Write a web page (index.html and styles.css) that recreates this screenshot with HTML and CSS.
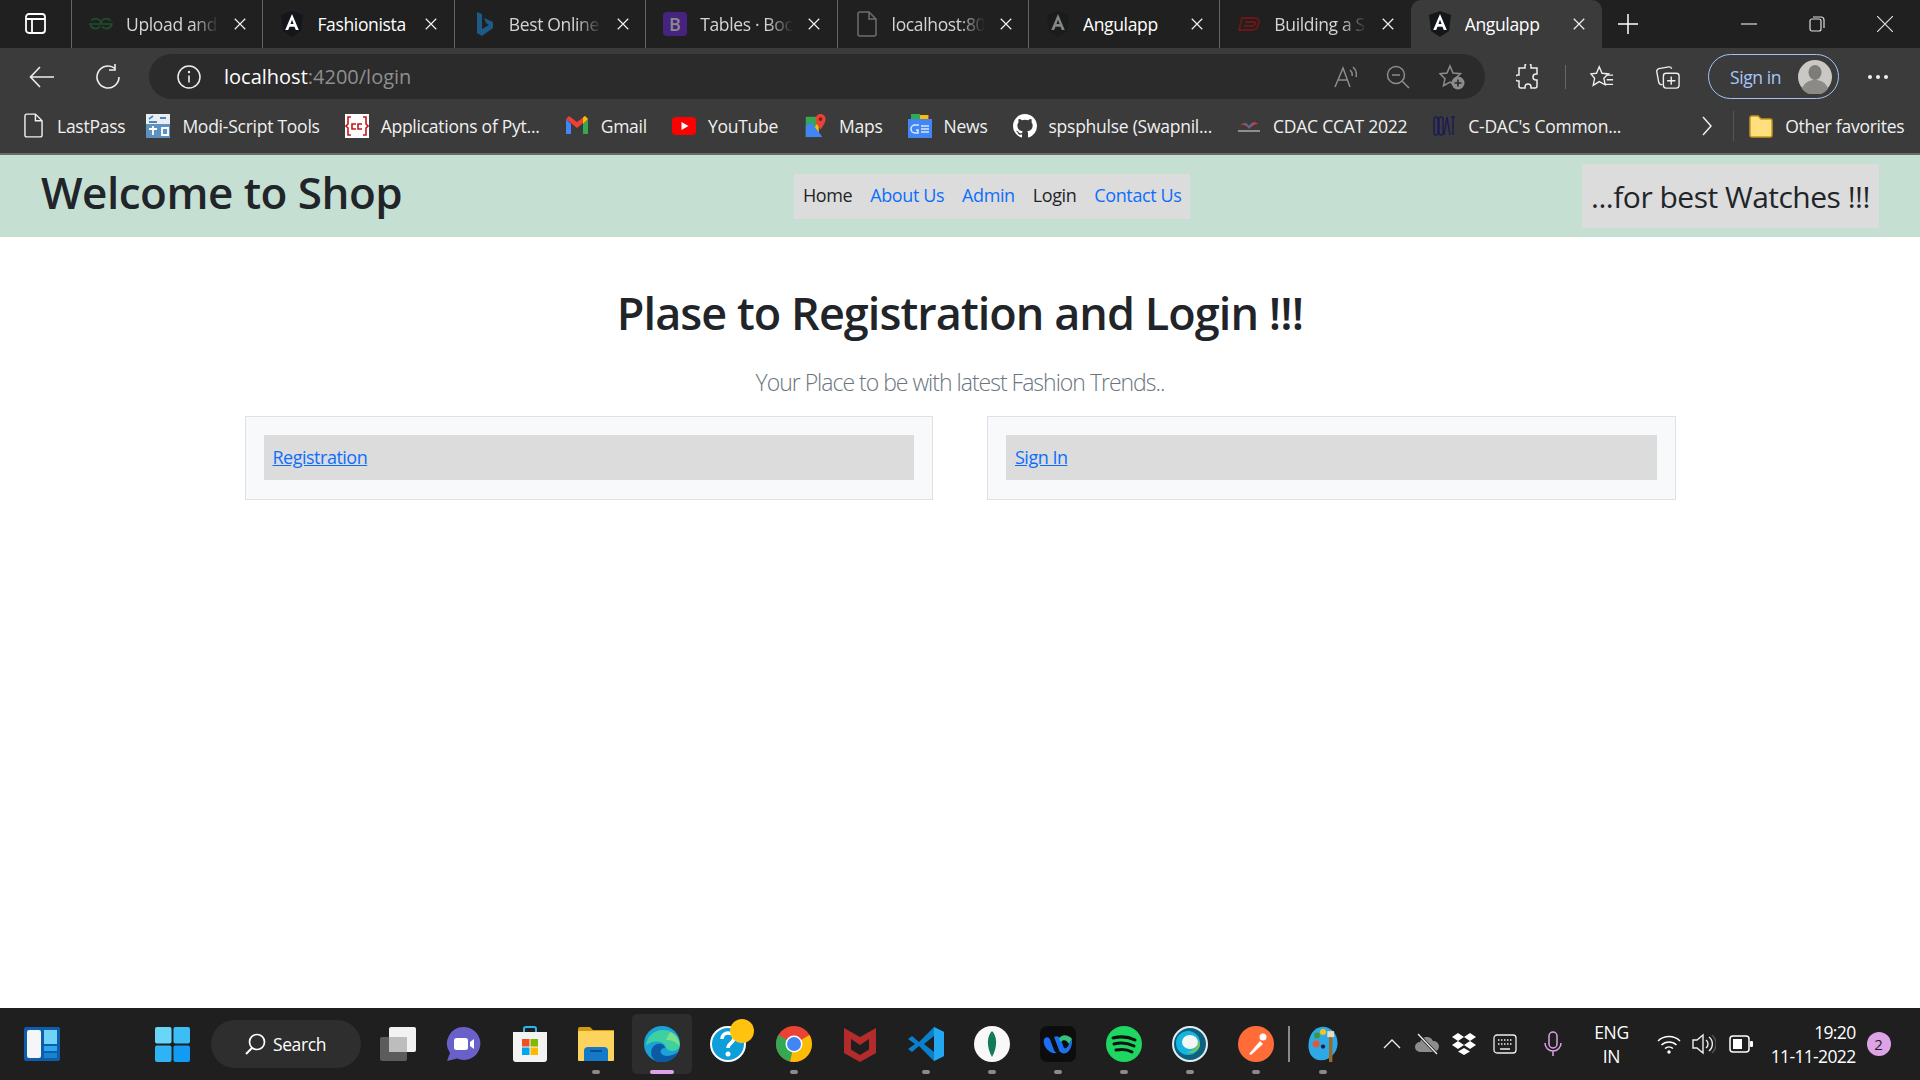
FILE: index.html
```html
<!DOCTYPE html>
<html>
<head>
  <title>Angulapp</title>
  <link rel="stylesheet" href="styles.css">
</head>
<body>
  <svg class="sprite" width="0" height="0">
    <symbol id="i-x" viewBox="0 0 16 16"><path d="M2 2l12 12M14 2L2 14" fill="none" stroke="currentColor" stroke-width="1.4"/></symbol>
    <symbol id="i-ng" viewBox="0 0 24 26"><path d="M12 0L1 4l2 16 9 6 9-6 2-16z" fill="#14161b"/><path d="M12 3L5.2 19h3l1.300-3.300h5L15.800 19h3zM10.500 13L12 8.800l1.600 4.200z" fill="#fff"/></symbol>
    <symbol id="i-page" viewBox="0 0 20 26"><path d="M3 1h9l7 7v15a2 2 0 0 1-2 2H3a2 2 0 0 1-2-2V3a2 2 0 0 1 2-2zM12 1v7h7" fill="none" stroke="currentColor" stroke-width="1.5"/></symbol>
  </svg>

  <!-- tab strip -->
  <div class="tabstrip">
    <div class="side-btn">
      <svg width="21" height="21" viewBox="0 0 21 21"><rect x="1" y="1" width="19" height="19" rx="3" fill="none" stroke="#fff" stroke-width="1.8"/><path d="M1 6h19M7 6v14" stroke="#fff" stroke-width="1.8"/></svg>
    </div>
    <div class="tab">
      <svg class="favicon" viewBox="0 0 22 12"><path d="M11 6h10a5 5 0 0 1-9 2M11 6H1a5 5 0 0 0 9 2M11 6c0-3 2-5 5-5 2 0 3 1 4 2M11 6c0-3-2-5-5-5-2 0-3 1-4 2" fill="none" stroke="#1f4d2a" stroke-width="1.6"/></svg>
      <span class="tab-title">Upload and</span>
      <svg class="tab-x"><use href="#i-x"/></svg>
    </div>
    <div class="tab">
      <svg class="favicon"><use href="#i-ng"/></svg>
      <span class="tab-title bright">Fashionista</span>
      <svg class="tab-x"><use href="#i-x"/></svg>
    </div>
    <div class="tab">
      <svg class="favicon" viewBox="0 0 22 26"><path d="M4 1l5 2v15l7-4-3-2-2-5 9 4v6L9 25l-5-3z" fill="#1d5a86"/></svg>
      <span class="tab-title">Best Online</span>
      <svg class="tab-x"><use href="#i-x"/></svg>
    </div>
    <div class="tab">
      <svg class="favicon" viewBox="0 0 24 24"><rect width="24" height="24" rx="4" fill="#45237f"/><text x="12" y="19" class="fav-b">B</text></svg>
      <span class="tab-title">Tables · Boo</span>
      <svg class="tab-x"><use href="#i-x"/></svg>
    </div>
    <div class="tab">
      <svg class="favicon dim-page"><use href="#i-page"/></svg>
      <span class="tab-title">localhost:80</span>
      <svg class="tab-x"><use href="#i-x"/></svg>
    </div>
    <div class="tab">
      <svg class="favicon dimmed"><use href="#i-ng"/></svg>
      <span class="tab-title bright">Angulapp</span>
      <svg class="tab-x"><use href="#i-x"/></svg>
    </div>
    <div class="tab">
      <svg class="favicon" viewBox="0 0 24 16"><path d="M5 2h13a4 4 0 0 1 4 5l-1 2a6 6 0 0 1-6 5H2zM8 6h9a1 1 0 0 1 1 2 3 3 0 0 1-3 2H7" fill="none" stroke="#6d1616" stroke-width="1.8"/></svg>
      <span class="tab-title">Building a S</span>
      <svg class="tab-x"><use href="#i-x"/></svg>
    </div>
    <div class="tab active">
      <svg class="favicon"><use href="#i-ng"/></svg>
      <span class="tab-title bright">Angulapp</span>
      <svg class="tab-x"><use href="#i-x"/></svg>
    </div>
    <div class="new-tab">
      <svg width="22" height="22" viewBox="0 0 22 22"><path d="M11 1v20M1 11h20" stroke="#fff" stroke-width="1.5"/></svg>
    </div>
    <div class="win-btns">
      <svg class="win-btn" viewBox="0 0 16 16"><path d="M0 8h16" stroke="#ddd" stroke-width="1.2"/></svg>
      <svg class="win-btn" viewBox="0 0 16 16"><rect x="1" y="3" width="11" height="12" rx="2" fill="none" stroke="#ddd" stroke-width="1.2"/><path d="M4 1h8a3 3 0 0 1 3 3v8" fill="none" stroke="#ddd" stroke-width="1.2"/></svg>
      <svg class="win-btn" viewBox="0 0 16 16"><path d="M0 0l16 16M16 0L0 16" stroke="#ddd" stroke-width="1.2"/></svg>
    </div>
  </div>

  <!-- address bar -->
  <div class="toolbar">
    <svg class="nav-btn" viewBox="0 0 26 22"><path d="M25 11H2M11 1L1.5 11 11 21" fill="none" stroke="#eee" stroke-width="1.6"/></svg>
    <svg class="nav-btn reload" viewBox="0 0 26 26"><path d="M20 4.5A11 11 0 1 0 24 13M20 0v6h-6" fill="none" stroke="#eee" stroke-width="1.6"/></svg>
    <div class="omnibox">
      <svg class="info" viewBox="0 0 24 24"><circle cx="12" cy="12" r="11" fill="none" stroke="#eee" stroke-width="1.5"/><path d="M12 10.500v7" stroke="#eee" stroke-width="1.6"/><circle cx="12" cy="7" r="1.200" fill="#eee"/></svg>
      <span class="url"><span class="host">localhost</span>:4200/login</span>
      <div class="omni-icons">
        <svg class="omni-icon" viewBox="0 0 24 24"><path d="M2 22L10 3l7 19M5 15h10M17 5a6 6 0 0 1 2 6M20 2a10 10 0 0 1 3 10" fill="none" stroke="#8c8c8c" stroke-width="1.500"/></svg>
        <svg class="omni-icon" viewBox="0 0 24 24"><circle cx="10" cy="10" r="8.500" fill="none" stroke="#8c8c8c" stroke-width="1.500"/><path d="M16 16l7 7M6 10h8" stroke="#8c8c8c" stroke-width="1.500"/></svg>
        <svg class="omni-icon fav-add" viewBox="0 0 26 26"><path d="M11 2l3 7 7.500.7-5.500 5 1.500 7L11 18l-6.500 3.700 1.500-7-5-5L8 9z" fill="none" stroke="#8c8c8c" stroke-width="1.500"/><circle cx="19" cy="19" r="6.500" fill="#8c8c8c"/><path d="M19 15.500v7M15.500 19h7" stroke="#2b2b2b" stroke-width="1.600"/></svg>
      </div>
    </div>
    <svg class="tool-icon puzzle" viewBox="0 0 24 26"><path d="M9 2a3 3 0 0 1 6 0v2h6v6h-1a3 3 0 0 0 0 6h1v6a2 2 0 0 1-2 2h-4v-1a3 3 0 0 0-6 0v1H5a2 2 0 0 1-2-2v-5H2a3 3 0 0 1 0-6h1V4h6z" fill="none" stroke="#eee" stroke-width="1.500"/></svg>
    <span class="tool-sep"></span>
    <svg class="tool-icon fav-list" viewBox="0 0 26 26"><path d="M10 2l3 7 7 .6-5 4.800 1.500 7L10 18l-6.500 4 1.500-7.600L1 9.600 7 9zM17 11h8M18 16h7M17 21h8" fill="none" stroke="#eee" stroke-width="1.500"/></svg>
    <svg class="tool-icon coll" viewBox="0 0 26 26"><path d="M7 21a3 3 0 0 1-4-2L1 8a3 3 0 0 1 2-4l11-2a3 3 0 0 1 3 2" fill="none" stroke="#eee" stroke-width="1.500"/><rect x="8" y="9" width="17" height="16" rx="3" fill="none" stroke="#eee" stroke-width="1.500"/><path d="M16.500 12.500v9M12 17h9" stroke="#eee" stroke-width="1.500"/></svg>
    <div class="signin">
      <span>Sign in</span>
      <svg class="avatar" viewBox="0 0 34 34"><circle cx="17" cy="17" r="17" fill="#c9c8c4"/><ellipse cx="17" cy="12.500" rx="6.500" ry="7.500" fill="#7d7c79"/><path d="M4 29c2-7 8-9 13-9s11 2 13 9a17 17 0 0 1-26 0z" fill="#8b8a87"/></svg>
    </div>
    <div class="more-btn"><i></i><i></i><i></i></div>
  </div>

  <!-- favorites bar -->
  <div class="bookmarks">
    <div class="bm first">
      <svg class="bm-icon page-ic"><use href="#i-page"/></svg><span>LastPass</span>
    </div>
    <div class="bm">
      <svg class="bm-icon" viewBox="0 0 24 24"><rect width="24" height="24" fill="#e9eef3"/><rect y="10" width="24" height="14" fill="#5d92c0"/><path d="M3 8h8M3 5l4-3M14 4h6M16 14h6v7h-6zM3 15h8M7 12v9" stroke="#4f86b8" stroke-width="1.800" fill="none"/><path d="M3 15h8M7 12v9M16 14h6v7h-6z" stroke="#fff" stroke-width="1.800" fill="none"/></svg><span>Modi-Script Tools</span>
    </div>
    <div class="bm">
      <svg class="bm-icon" viewBox="0 0 24 24"><rect width="24" height="24" fill="#fff"/><path d="M6 3H3v7l-2 2 2 2v7h3M18 3h3v7l2 2-2 2v7h-3" fill="none" stroke="#c4161c" stroke-width="1.600"/><path d="M11 10H7v5h4M17 10h-4v5h4" fill="none" stroke="#c4161c" stroke-width="1.600"/></svg><span>Applications of Pyt...</span>
    </div>
    <div class="bm">
      <svg class="bm-icon" viewBox="0 0 24 20"><path d="M1 3v15h5V8z" fill="#4285f4"/><path d="M23 3v15h-5V8z" fill="#34a853"/><path d="M1 3l11 9 11-9-3-3-8 6-8-6z" fill="#ea4335"/><path d="M18 8l5-5-3-3-2 1.500z" fill="#fbbc04"/></svg><span>Gmail</span>
    </div>
    <div class="bm">
      <svg class="bm-icon" viewBox="0 0 24 18"><rect width="24" height="18" rx="4" fill="#f00"/><path d="M9.500 5v8l7-4z" fill="#fff"/></svg><span>YouTube</span>
    </div>
    <div class="bm">
      <svg class="bm-icon" viewBox="0 0 24 26"><path d="M2 3h14v22H2z" fill="#35a852"/><path d="M2 25L16 9v16z" fill="#fbbc04"/><path d="M2 25V13l6-4 12 16z" fill="#4285f4"/><path d="M18 0a5.500 5.500 0 0 1 5.500 5.500C23.500 10 18 17 18 17s-5.500-7-5.500-11.500A5.500 5.500 0 0 1 18 0z" fill="#ea4335"/><circle cx="18" cy="5.500" r="2" fill="#7c1f19"/></svg><span>Maps</span>
    </div>
    <div class="bm">
      <svg class="bm-icon" viewBox="0 0 24 24"><path d="M3 1h18v8H3z" fill="#ea4335"/><path d="M3 0h9v8H3z" fill="#34a853"/><path d="M12 1h8v7h-8z" fill="#fbbc04"/><rect y="5" width="24" height="19" fill="#4285f4"/><path d="M11 11H7a2.500 2.500 0 0 0 0 8h3v-3H8M13 12h8M13 15h8M13 18h8" fill="none" stroke="#dbe8fd" stroke-width="1.500"/></svg><span>News</span>
    </div>
    <div class="bm">
      <svg class="bm-icon" viewBox="0 0 16 16"><path fill="#fff" d="M8 0C3.580 0 0 3.580 0 8c0 3.540 2.290 6.530 5.470 7.590.4.070.55-.17.55-.38 0-.19-.01-.82-.01-1.490-2.010.37-2.530-.49-2.690-.94-.09-.23-.48-.94-.82-1.130-.28-.15-.68-.52-.01-.53.630-.01 1.080.58 1.230.82.720 1.210 1.870.87 2.330.66.070-.52.280-.87.510-1.070-1.780-.2-3.640-.89-3.640-3.950 0-.87.31-1.590.82-2.150-.08-.2-.36-1.020.08-2.120 0 0 .67-.21 2.200.82a7.600 7.600 0 0 1 4 0c1.530-1.040 2.200-.82 2.200-.82.44 1.100.16 1.920.08 2.120.51.56.82 1.270.82 2.150 0 3.070-1.870 3.750-3.650 3.950.29.250.54.730.54 1.480 0 1.070-.01 1.930-.01 2.200 0 .21.15.46.55.38A8 8 0 0 0 16 8c0-4.420-3.580-8-8-8z"/></svg><span>spsphulse (Swapnil...</span>
    </div>
    <div class="bm">
      <svg class="bm-icon" viewBox="0 0 24 16"><path d="M3 7c4-3 7-2 9 1 2-4 6-5 9-2-4 0-6 2-9 5-2-3-5-5-9-4z" fill="#d23b3b"/><path d="M8 5l4 4 4-4" stroke="#3a6fb0" fill="none" stroke-width="1.500"/><path d="M1 13h22" stroke="#8a8f96" stroke-width="2"/></svg><span>CDAC CCAT 2022</span>
    </div>
    <div class="bm">
      <svg class="bm-icon" viewBox="0 0 22 24"><rect x="1" y="3" width="4" height="18" rx="2" fill="none" stroke="#1c1c56" stroke-width="1.500"/><rect x="6" y="3" width="4" height="18" rx="2" fill="none" stroke="#1c1c56" stroke-width="1.500"/><path d="M11 21l3-18 3 18M18 3h4M20 3v18" fill="none" stroke="#1c1c56" stroke-width="1.500"/></svg><span>C-DAC's Common...</span>
    </div>
    <svg class="bm-more" viewBox="0 0 10 20"><path d="M1 1l8 9-8 9" fill="none" stroke="#eee" stroke-width="1.500"/></svg>
    <span class="bm-sep"></span>
    <div class="bm other">
      <svg class="bm-icon" viewBox="0 0 24 24"><path d="M1 4a2 2 0 0 1 2-2h6l3 3h9a2 2 0 0 1 2 2v14a2 2 0 0 1-2 2H3a2 2 0 0 1-2-2z" fill="#ffdf7e" stroke="#c9971c" stroke-width="1.500"/></svg><span>Other favorites</span>
    </div>
  </div>
  <div class="chrome-edge"></div>

  <!-- page -->
  <header class="shop-header">
    <h1 class="shop-title">Welcome to Shop</h1>
    <nav class="shop-nav">
      <a class="nav-dark">Home</a>
      <a>About Us</a>
      <a>Admin</a>
      <a class="nav-dark">Login</a>
      <a>Contact Us</a>
    </nav>
    <div class="shop-tag">...for best Watches !!!</div>
  </header>

  <main class="page">
    <h1 class="hero-title">Plase to Registration and Login !!!</h1>
    <p class="lead">Your Place to be with latest Fashion Trends..</p>
    <div class="cards">
      <div class="card"><div class="card-link"><a href="#">Registration</a></div></div>
      <div class="card"><div class="card-link"><a href="#">Sign In</a></div></div>
    </div>
  </main>

  <!-- taskbar -->
  <footer class="taskbar">
    <svg class="widgets" viewBox="0 0 36 34"><rect width="36" height="34" rx="2" fill="#0f5cab"/><rect x="3" y="3" width="14" height="28" rx="2" fill="#f4f6f8"/><rect x="20" y="3" width="13" height="14" fill="#6fd3f7"/><rect x="20" y="19" width="13" height="5" fill="#2aa7ee"/><rect x="20" y="26" width="13" height="5" fill="#1784d2"/></svg>
    <svg class="start" viewBox="0 0 36 36"><rect width="17" height="17" rx="2" fill="#69d6f8"/><rect x="19" width="17" height="17" rx="2" fill="#3dbdf5"/><rect y="19" width="17" height="17" rx="2" fill="#2fb3f3"/><rect x="19" y="19" width="17" height="17" rx="2" fill="#129bf2"/></svg>
    <div class="search">
      <svg width="22" height="22" viewBox="0 0 22 22"><circle cx="13" cy="9" r="7.500" fill="none" stroke="#fff" stroke-width="1.700"/><path d="M8 15l-6 6" stroke="#fff" stroke-width="1.900"/></svg>
      <span>Search</span>
    </div>
    <div class="apps">
      <div class="app"><svg class="app-ic" viewBox="0 0 36 34"><rect y="10" width="27" height="24" rx="2" fill="#5c5c5c"/><rect x="9" width="27" height="25" rx="2" fill="#f2f2f2"/><rect x="9" y="10" width="18" height="15" fill="#bdbdbd"/></svg></div>
      <div class="app"><svg class="app-ic" viewBox="0 0 36 36"><path d="M18 1a16.500 16.500 0 1 1-7 31.500L1 35l3-8A16.500 16.500 0 0 1 18 1z" fill="#6a60c9"/><rect x="8" y="12" width="14" height="12" rx="2.500" fill="#fff"/><path d="M24 16l4-3v10l-4-3z" fill="#fff"/></svg></div>
      <div class="app"><svg class="app-ic" viewBox="0 0 36 36"><path d="M12 6V3a2 2 0 0 1 2-2h8a2 2 0 0 1 2 2v3" fill="none" stroke="#2cb5f0" stroke-width="2"/><path d="M1 6h34v27a3 3 0 0 1-3 3H4a3 3 0 0 1-3-3z" fill="#f3f3f3"/><rect x="10" y="13" width="7.500" height="7.500" fill="#f25022"/><rect x="18.500" y="13" width="7.500" height="7.500" fill="#7fba00"/><rect x="10" y="21.500" width="7.500" height="7.500" fill="#00a4ef"/><rect x="18.500" y="21.500" width="7.500" height="7.500" fill="#ffb900"/></svg></div>
      <div class="app running"><svg class="app-ic" viewBox="0 0 36 34"><path d="M0 2a2 2 0 0 1 2-2h10l3 3h21v6H0z" fill="#d59a12"/><rect y="4" width="36" height="30" rx="1" fill="#fcd35c"/><path d="M6 34V24a4 4 0 0 1 4-4h16a4 4 0 0 1 4 4v10z" fill="#1479c9"/><path d="M12 24h12" stroke="#0b4f8a" stroke-width="2"/></svg></div>
      <div class="app running edge"><svg class="app-ic" viewBox="0 0 36 36"><circle cx="18" cy="18" r="18" fill="#1aa2d8"/><path d="M2 20C3 9 11 4 19 4c9 0 16 6 17 14 0 4-3 7-8 7-6 0-5-4-8-7-5-4-14-3-18 2z" fill="#3ed0a0"/><path d="M14 36C6 33 5 23 11 19c5-3 10 0 10 3-4 0-5 3-4 5 2 4 10 4 17-1-3 6-10 12-20 10z" fill="#0c59a4"/><path d="M22 14c4 0 10 1 13 6 1-6-3-12-9-14z" fill="#7ae08a"/></svg></div>
      <div class="app badge-app"><svg class="app-ic" viewBox="0 0 36 36"><circle cx="18" cy="18" r="17" fill="#0e9fdb" stroke="#fff" stroke-width="2"/><path d="M12 13c0-4 3-6 6-6s6 2 6 5c0 5-6 5-6 10" fill="none" stroke="#fff" stroke-width="3.500"/><circle cx="18" cy="28" r="2.500" fill="#fff"/></svg><span class="notify"></span></div>
      <div class="app running"><svg class="app-ic" viewBox="0 0 36 36"><circle cx="18" cy="18" r="18" fill="#ea4335"/><path d="M18 18L2.400 9A18 18 0 0 0 14 35.500z" fill="#34a853"/><path d="M18 18l-4 17.500A18 18 0 0 0 36 18 18 18 0 0 0 33.600 9z" fill="#fbbc04"/><circle cx="18" cy="18" r="8.500" fill="#fff"/><circle cx="18" cy="18" r="7" fill="#4285f4"/></svg></div>
      <div class="app"><svg class="app-ic" viewBox="0 0 36 36"><path d="M2 2l16 9 16-9v25L18 36 2 27z" fill="#b32b2b"/><path d="M9 13l9 6 9-6v10.500L18 29l-9-5.500z" fill="#1f1f1f"/></svg></div>
      <div class="app running"><svg class="app-ic" viewBox="0 0 36 36"><path d="M26 1l10 5v24l-10 5L11 20l-7 6-4-3 7-5-7-5 4-3 7 6z" fill="#0a7fcb"/><path d="M26 1l10 5v24l-10 5z" fill="#22a7f0"/><path d="M26 10L16 18l10 8z" fill="#1f1f1f"/></svg></div>
      <div class="app running"><svg class="app-ic" viewBox="0 0 36 36"><circle cx="18" cy="18" r="18" fill="#f8f8f8"/><path d="M18 5c5 5 6 15 0 26-6-11-5-21 0-26z" fill="#13795b"/></svg></div>
      <div class="app running"><svg class="app-ic" viewBox="0 0 36 36"><rect width="36" height="36" rx="7" fill="#0d0d0d"/><path d="M4 13c3-3 6-2 7 3l3 8c1 3 4 3 5 0l-5-13c3-2 6 0 7 3l3 8c2 1 4-1 5-4l3-5v4c-1 8-6 12-10 10-2-1-3-2-3-3-2 4-7 4-10 1-4-3-6-8-5-12z" fill="#1b6ff0"/><path d="M19 13c2-5 9-5 13 0l-3 5c-2-4-6-5-8-2z" fill="#33c47c"/></svg></div>
      <div class="app running"><svg class="app-ic" viewBox="0 0 36 36"><circle cx="18" cy="18" r="18" fill="#1ed760"/><path d="M7 12c8-2 16-1 22 2M8 18c7-2 14-1 20 2M10 24c5-1 11-1 16 2" fill="none" stroke="#111" stroke-width="3" stroke-linecap="round"/></svg></div>
      <div class="app running"><svg class="app-ic" viewBox="0 0 36 36"><circle cx="18" cy="18" r="17" fill="#0f5f7f" stroke="#dfeef3" stroke-width="2"/><circle cx="16" cy="17" r="12" fill="#14b4e0"/><path d="M26 11c2 8-4 15-12 15 6 3 14-1 14-8z" fill="#78c060"/><ellipse cx="18" cy="16" rx="8" ry="7" fill="#f3f7f3"/></svg></div>
      <div class="app running"><svg class="app-ic" viewBox="0 0 36 36"><circle cx="18" cy="18" r="18" fill="#ff6c37"/><path d="M11 28l11-13 3 3-12 11z" fill="#fff"/><circle cx="25" cy="11" r="3.500" fill="#fff"/></svg></div>
      <span class="apps-sep"></span>
      <div class="app running"><svg class="app-ic" viewBox="0 0 36 42"><path d="M18 1c9 0 17 8 17 19s-9 20-19 20C6 40 1 32 1 23 1 11 8 1 18 1z" fill="#2fa8e6"/><circle cx="10" cy="21" r="4" fill="#e8563a"/><circle cx="11" cy="11" r="3.500" fill="#3a9a3a"/><circle cx="18" cy="7" r="3.500" fill="#f5c518"/><circle cx="18" cy="24" r="2.500" fill="#12243c"/><rect x="25" y="12" width="4" height="30" fill="#9a6a2a"/><rect x="23" y="6" width="8" height="7" fill="#e8dcc2"/></svg></div>
    </div>
    <div class="tray">
      <svg class="chev" viewBox="0 0 18 10"><path d="M1 9l8-8 8 8" fill="none" stroke="#eee" stroke-width="1.300"/></svg>
      <svg class="cloud" viewBox="0 0 26 24"><path d="M6 20a5 5 0 0 1 0-10 7 7 0 0 1 13-1 5.500 5.500 0 0 1 1 11z" fill="#8c8c8c"/><path d="M4 2l19 20" stroke="#1f1f1f" stroke-width="3"/><path d="M4 2l19 20" stroke="#eee" stroke-width="1.300"/></svg>
      <svg class="dropbox" viewBox="0 0 24 22"><path d="M6 0l6 4-6 4-6-4zM18 0l6 4-6 4-6-4zM6 8l6 4-6 4-6-4zM18 8l6 4-6 4-6-4zM12 15l6 3.500-6 3.500-6-3.500z" fill="#fff"/></svg>
      <svg class="keyboard" viewBox="0 0 24 20"><rect x="1" y="1" width="22" height="18" rx="3" fill="none" stroke="#eee" stroke-width="1.300"/><path d="M5 6h14M5 10h14" stroke="#eee" stroke-width="1.500" stroke-dasharray="1.500 1.500"/><path d="M7 15h10" stroke="#eee" stroke-width="1.500"/></svg>
      <svg class="mic" viewBox="0 0 18 26"><rect x="5" y="1" width="8" height="16" rx="4" fill="none" stroke="#dda3e6" stroke-width="1.500"/><path d="M1 12a8 8 0 0 0 16 0M9 20v5" fill="none" stroke="#dda3e6" stroke-width="1.500"/></svg>
      <div class="lang">ENG<br>IN</div>
      <svg class="wifi" viewBox="0 0 24 20"><path d="M1 7a16 16 0 0 1 22 0M4.500 11a11 11 0 0 1 15 0M8 14.500a6 6 0 0 1 8 0" fill="none" stroke="#fff" stroke-width="1.500"/><circle cx="12" cy="18" r="1.700" fill="#fff"/></svg>
      <svg class="sound" viewBox="0 0 24 22"><path d="M1 7h4l6-5v18l-6-5H1zM14 7a5 5 0 0 1 0 8M17 4a9 9 0 0 1 0 14" fill="none" stroke="#eee" stroke-width="1.400"/><path d="M20 2a12 12 0 0 1 0 18" fill="none" stroke="#555" stroke-width="1.400"/></svg>
      <svg class="battery" viewBox="0 0 24 18"><rect x="1" y="1" width="19" height="16" rx="3" fill="none" stroke="#fff" stroke-width="1.500"/><rect x="4" y="4" width="9" height="10" fill="#fff"/><rect x="21" y="6" width="3" height="6" rx="1" fill="#fff"/></svg>
      <div class="clock">19:20<br>11-11-2022</div>
      <span class="notif-count">2</span>
    </div>
  </footer>
</body>
</html>
```

FILE: styles.css
```css
/* browser chrome + page */
* {
  box-sizing: border-box;
}

body {
  margin: 0;
  height: 1080px;
  overflow: hidden;
  display: flex;
  flex-direction: column;
  background: #fff;
  font-family: "Open Sans", "Noto Sans", sans-serif;
  color: #212529;
}

.sprite {
  position: absolute;
}

/* tab strip */
.tabstrip {
  display: flex;
  height: 48px;
  background: #202020;
  color: #fff;
}

.side-btn {
  width: 71px;
  display: flex;
  align-items: center;
  padding-left: 25px;
  padding-bottom: 2px;
}

.tab {
  width: 191.4px;
  display: flex;
  align-items: center;
  height: 48px;
  padding-left: 17px;
  border-left: 1px solid #636363;
}

.tab.active {
  background: #3b3b3b;
  border-left: 0;
  border-radius: 10px 10px 0 0;
}

.favicon {
  width: 24px;
  height: 26px;
  flex: none;
}

.dimmed {
  opacity: 0.45;
}

.dim-page {
  color: #6e6e6e;
}

.fav-b {
  font-size: 18px;
  font-weight: 600;
  text-anchor: middle;
  fill: #8a8a8a;
  font-family: "Open Sans", sans-serif;
}

.tab-title {
  margin-left: 13px;
  width: 93px;
  white-space: nowrap;
  overflow: hidden;
  font-size: 17.5px;
  letter-spacing: -0.35px;
  color: #d4d4d4;
  -webkit-mask-image: linear-gradient(90deg, #000 72%, transparent 100%);
  mask-image: linear-gradient(90deg, #000 72%, transparent 100%);
}

.tab-title.bright {
  color: #fff;
  -webkit-mask-image: none;
  mask-image: none;
}

.tab-x {
  width: 14px;
  height: 14px;
  margin-left: 14px;
  color: #f0f0f0;
  flex: none;
}

.new-tab {
  width: 52px;
  display: flex;
  align-items: center;
  justify-content: center;
}

.win-btns {
  margin-left: auto;
  display: flex;
  align-items: center;
  gap: 52px;
  padding-right: 27px;
}

.win-btn {
  width: 16px;
  height: 16px;
}

/* toolbar */
.toolbar {
  height: 51px;
  padding-top: 6px;
  display: flex;
  align-items: flex-start;
  background: #3b3b3b;
}

.nav-btn {
  width: 26px;
  height: 22px;
  margin: 12px 0 0 29px;
}

.reload {
  height: 26px;
  margin: 10px 0 0 40px;
}

.omnibox {
  width: 1336px;
  height: 45px;
  margin-left: 28px;
  border-radius: 23px;
  background: #2b2b2b;
  display: flex;
  align-items: center;
  padding-left: 28px;
}

.info {
  width: 24px;
  height: 24px;
  flex: none;
}

.url {
  margin-left: 23px;
  font-size: 20px;
  letter-spacing: 0;
  color: #8f8f8f;
}

.host {
  color: #fff;
}

.omni-icons {
  margin-left: auto;
  display: flex;
  align-items: center;
  gap: 29px;
  padding-right: 20px;
}

.omni-icon {
  width: 24px;
  height: 24px;
}

.fav-add {
  width: 26px;
  height: 26px;
}

.tool-icon {
  width: 24px;
  height: 26px;
  margin-top: 10px;
  flex: none;
}

.puzzle {
  margin-left: 31px;
}

.tool-sep {
  width: 1px;
  height: 24px;
  margin: 11px 0 0 25px;
  background: #666;
}

.fav-list {
  margin-left: 24px;
}

.coll {
  margin-left: 42px;
}

.signin {
  width: 131px;
  height: 45px;
  margin-left: 28px;
  border: 1.5px solid #a3c4f0;
  border-radius: 23px;
  display: flex;
  align-items: center;
  padding-left: 21px;
  color: #a8c7fa;
  font-size: 17.5px;
  letter-spacing: -0.4px;
  flex: none;
}

.avatar {
  width: 34px;
  height: 34px;
  margin-left: auto;
  margin-right: 6px;
}

.more-btn {
  display: flex;
  gap: 4px;
  margin: 21px 0 0 29px;
}

.more-btn i {
  width: 4px;
  height: 4px;
  border-radius: 50%;
  background: #f0f0f0;
}

/* favorites */
.bookmarks {
  height: 54px;
  padding-bottom: 1px;
  display: flex;
  align-items: center;
  padding-left: 24px;
  background: #3b3b3b;
  color: #f0f0f0;
  font-size: 17.5px;
  letter-spacing: -0.25px;
  white-space: nowrap;
}

.bm {
  display: flex;
  align-items: center;
  gap: 12px;
  margin-right: 25px;
}

.bm.first {
  margin-right: 21px;
}

.bm-icon {
  width: 24px;
  height: 24px;
  flex: none;
}

.page-ic {
  width: 19px;
  height: 25px;
  margin-right: 2px;
  color: #f0f0f0;
}

.bm-more {
  width: 10px;
  height: 20px;
  margin-left: 56px;
}

.bm-sep {
  width: 1px;
  height: 30px;
  margin-left: 21px;
  background: #555;
}

.bm.other {
  margin: 0 0 0 15px;
}

.chrome-edge {
  height: 2px;
  background: #6b6b6b;
}

/* shop header */
.shop-header {
  height: 82px;
  display: flex;
  align-items: center;
  justify-content: space-between;
  padding: 0 41px;
  background: #c5e0d3;
}

.shop-title {
  margin: 0 0 7px;
  font-size: 44px;
  font-weight: 600;
  letter-spacing: -0.5px;
  line-height: 1.2;
}

.shop-nav {
  display: flex;
  align-items: center;
  height: 45px;
  padding: 0 9px 2px;
  gap: 18px;
  background: #dcdcdc;
  font-size: 18px;
  letter-spacing: -0.4px;
  color: #0d6efd;
}

.shop-nav .nav-dark {
  color: #212529;
}

.shop-tag {
  height: 64px;
  display: flex;
  align-items: center;
  padding: 0 9px;
  background: #dcdcdc;
  font-size: 30px;
  letter-spacing: -0.5px;
}

/* main */
.page {
  flex: 1;
  display: flex;
  flex-direction: column;
  align-items: center;
}

.hero-title {
  margin: 49px 0 0;
  font-size: 45px;
  font-weight: 600;
  letter-spacing: -0.95px;
  line-height: 54px;
}

.lead {
  margin: 27px 0 0;
  font-size: 23px;
  font-weight: 300;
  letter-spacing: -1px;
  line-height: 30px;
  color: #6c757d;
}

.cards {
  width: 1431px;
  display: grid;
  grid-template-columns: 1fr 1fr;
  gap: 54px;
  margin-top: 19px;
}

.card {
  height: 84px;
  padding: 18px;
  border: 1px solid #dee2e6;
  background: #f8f9fa;
}

.card-link {
  height: 45px;
  display: flex;
  align-items: center;
  padding: 0 0 2px 9px;
  background: #dcdcdc;
  font-size: 18px;
  letter-spacing: -0.5px;
}

.card-link a {
  color: #0d6efd;
}

/* taskbar */
.taskbar {
  height: 72px;
  display: flex;
  align-items: center;
  background: #1f1f1f;
  color: #fff;
}

.widgets {
  width: 36px;
  height: 34px;
  margin-left: 24px;
  flex: none;
}

.start {
  width: 35px;
  height: 35px;
  margin-left: 95px;
  flex: none;
}

.search {
  width: 150px;
  height: 48px;
  margin-left: 21px;
  border-radius: 24px;
  background: #2e2e2e;
  display: flex;
  align-items: center;
  gap: 7px;
  padding-left: 33px;
  font-size: 17.5px;
  letter-spacing: -0.4px;
  flex: none;
}

.apps {
  display: flex;
  align-items: center;
  margin-left: 4px;
  flex: none;
}

.app {
  width: 66px;
  height: 60px;
  display: flex;
  align-items: center;
  justify-content: center;
  position: relative;
}

.app-ic {
  width: 36px;
  height: 36px;
}

.app.running::after {
  content: "";
  position: absolute;
  bottom: 0;
  left: 29px;
  width: 8px;
  height: 4px;
  border-radius: 2px;
  background: #8a8a8a;
}

.app.edge {
  width: 60px;
  margin: 0 3px;
  background: #2d2d2d;
  border-radius: 5px;
}

.app.edge::after {
  left: 18px;
  width: 24px;
  background: #dda3e6;
}

.notify {
  position: absolute;
  top: 5px;
  right: 7px;
  width: 24px;
  height: 24px;
  border-radius: 50%;
  background: #ffc20e;
}

.apps-sep {
  width: 1.5px;
  height: 36px;
  margin: 0 0 0 -1px;
  background: #8a8a8a;
}

.tray {
  display: flex;
  align-items: center;
  margin-left: 27px;
  flex: none;
}

.chev {
  width: 18px;
  height: 10px;
}

.cloud {
  width: 26px;
  height: 24px;
  margin-left: 13px;
}

.dropbox {
  width: 24px;
  height: 22px;
  margin-left: 12px;
}

.keyboard {
  width: 24px;
  height: 20px;
  margin-left: 17px;
}

.mic {
  width: 18px;
  height: 26px;
  margin-left: 27px;
}

.lang {
  width: 50px;
  margin-left: 25px;
  text-align: center;
  font-size: 17.5px;
  line-height: 24px;
  letter-spacing: -0.4px;
}

.wifi {
  width: 24px;
  height: 20px;
  margin-left: 20px;
}

.sound {
  width: 24px;
  height: 22px;
  margin-left: 11px;
}

.battery {
  width: 24px;
  height: 18px;
  margin-left: 13px;
}

.clock {
  width: 88px;
  margin-left: 15px;
  text-align: right;
  font-size: 17.5px;
  line-height: 24px;
  letter-spacing: -0.65px;
}

.notif-count {
  width: 24px;
  height: 24px;
  margin-left: 11px;
  border-radius: 50%;
  background: #dda3e6;
  color: #1f1f1f;
  font-size: 15px;
  text-align: center;
  line-height: 24px;
}
```
